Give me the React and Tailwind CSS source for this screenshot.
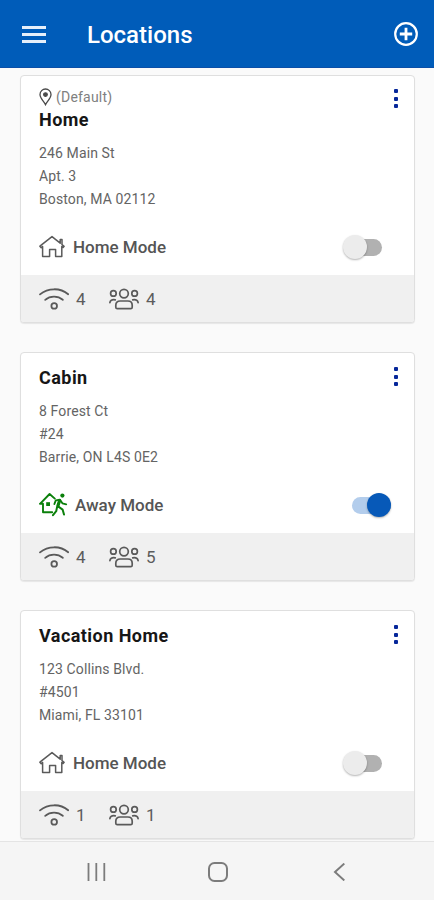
import React, { useState } from 'react';

const initialLocations = [
    { id: 1, name: 'Home', isDefault: true, address: ['246 Main St', 'Apt. 3', 'Boston, MA 02112'], away: false, devices: 4, people: 4 },
    { id: 2, name: 'Cabin', isDefault: false, address: ['8 Forest Ct', '#24', 'Barrie, ON L4S 0E2'], away: true, devices: 4, people: 5 },
    { id: 3, name: 'Vacation Home', isDefault: false, address: ['123 Collins Blvd.', '#4501', 'Miami, FL 33101'], away: false, devices: 1, people: 1 },
];

const PinIcon = () => (
    <svg className="h-[18px] w-[13px] shrink-0" viewBox="0 0 13 18" fill="none" stroke="#4a4a4a" strokeWidth="1.3">
        <path d="M6.5 16.6C5 13.4 1 10.3 1 6.5a5.5 5.5 0 0 1 11 0c0 3.8-4 6.9-5.5 10.1z" />
        <circle cx="6.5" cy="6.6" r="1.8" fill="#4a4a4a" />
    </svg>
);

const HouseIcon = () => (
    <svg className="h-6 w-[26px] shrink-0" viewBox="0 0 26 24" fill="none" stroke="#5a5a5a" strokeWidth="1.5" strokeLinejoin="round" strokeLinecap="round">
        <path d="M.9 11.2 13 1.6l8.2 6.6V4.6h1.8v5.1l2.1 1.6-1 1.2-1.3-1V21.4h-6.2v-6.8h-6v6.8H3.6V11.4l-1.4 1.3z" />
    </svg>
);

const AwayIcon = () => (
    <svg className="h-6 w-[29px] shrink-0" viewBox="0 0 29 24" fill="none" stroke="#0b800b" strokeWidth="1.9" strokeLinejoin="round" strokeLinecap="round">
        <path d="M4 10.8v8.4h9.2M1 10.8h3M1 10.8 10.6 1l5.2 4.6" />
        <rect x="7.2" y="9.2" width="3.8" height="3.8" fill="#0b800b" stroke="none" />
        <circle cx="23.4" cy="2.6" r="2.1" fill="#0b800b" stroke="none" />
        <path d="m15.4 11 1.4-3.6 4-.8 2.6 3.7 3.8 1" />
        <path d="m20.6 7.6-1.8 5.6" strokeWidth="3.2" />
        <path d="m19.4 13.6 4.2 3 1.4 5M18 14.4l-.8 3.8-3.2 4" strokeWidth="2" />
    </svg>
);

const WifiIcon = () => (
    <svg className="h-6 w-[30px] shrink-0" viewBox="0 0 30 24" fill="none" stroke="#5a5a5a" strokeWidth="1.8" strokeLinecap="round">
        <path d="M1 7.4C9 .6 21.4.6 29.2 7.2" />
        <path d="M6.2 12.9c5-4.3 12.6-4.3 17.6-.1" />
        <circle cx="15.2" cy="18.9" r="2.8" />
    </svg>
);

const PeopleIcon = () => (
    <svg className="h-6 w-[30px] shrink-0" viewBox="0 0 30 24" fill="none" stroke="#5a5a5a" strokeWidth="1.7" strokeLinecap="round" strokeLinejoin="round">
        <circle cx="15" cy="6.6" r="4.3" />
        <circle cx="4.4" cy="6.4" r="2.8" />
        <circle cx="25.6" cy="6.4" r="2.8" />
        <path d="M6.8 20.2v-2c0-2.7 1.6-4.2 4.3-4.2h7.8c2.7 0 4.3 1.5 4.3 4.2v2c0 1-.5 1.5-1.5 1.5H8.3c-1 0-1.5-.5-1.5-1.5z" />
        <path d="M.9 15.6c.2-2.2 1.8-3.4 5.4-2.8M29.1 15.6c-.2-2.2-1.8-3.4-5.4-2.8" />
    </svg>
);

const Toggle = ({ on, onClick }) => (
    <button
        onClick={onClick}
        role="switch"
        aria-checked={on}
        className={`flex h-6 w-[39px] items-center ${on ? 'mr-[23px]' : 'mr-8'}`}
    >
        <span className={`flex h-[17px] items-center rounded-full ${on ? 'w-full justify-end bg-[#b3cdec]' : 'ml-[3px] w-9 justify-start bg-[#b1b1b1]'}`}>
            <span className={`size-6 shrink-0 rounded-full shadow-[0_1px_2px_rgba(0,0,0,0.3)] ${on ? 'bg-[#0759b8]' : '-ml-[3px] bg-[#ececec]'}`}></span>
        </span>
    </button>
);

const LocationCard = ({ location, onToggle }) => (
    <div className="overflow-hidden rounded-[4px] border border-[#dfdfdf] bg-white shadow-[0_1px_1px_rgba(0,0,0,0.08)]">
        <div className={`flex justify-between pl-[18px] ${location.isDefault ? 'pt-[10px]' : 'pt-[13px]'}`}>
            <div>
                {location.isDefault && (
                    <div className="flex h-[22px] items-center gap-1 text-[14px] text-[#808080]">
                        <PinIcon />
                        <span className="tracking-[0.2px]">(Default)</span>
                    </div>
                )}
                <h2 className="text-[18px] leading-6 font-bold tracking-[0.45px] text-[#161616]">{location.name}</h2>
                <div className="mt-[10px] text-[14px] leading-[23px] tracking-[0.12px] text-[#646464]">
                    {location.address.map((line) => (
                        <p key={line}>{line}</p>
                    ))}
                </div>
            </div>
            <button className={`mr-[15px] flex h-[19px] w-[5px] flex-col justify-between ${location.isDefault ? 'mt-[3px]' : 'mt-px'}`}>
                <span className="size-1 rounded-[1px] bg-[#06279a]"></span>
                <span className="size-1 rounded-[1px] bg-[#06279a]"></span>
                <span className="size-1 rounded-[1px] bg-[#06279a]"></span>
            </button>
        </div>

        {/* Mode */}
        <div className="mt-6 mb-4 flex h-6 items-center justify-between pl-[18px]">
            <div className={`flex items-center ${location.away ? 'gap-[7px]' : 'gap-2'}`}>
                {location.away ? <AwayIcon /> : <HouseIcon />}
                <span className="pt-px text-[17px] font-medium text-[#555]">{location.away ? 'Away Mode' : 'Home Mode'}</span>
            </div>
            <Toggle on={location.away} onClick={onToggle} />
        </div>

        {/* Counts */}
        <div className="flex h-[47px] items-center bg-[#f0f0f0] pl-[18px] text-[17px] text-[#5c5c5c]">
            <WifiIcon />
            <span className="mt-[3px] ml-[7px] w-[33px]">{location.devices}</span>
            <PeopleIcon />
            <span className="mt-[3px] ml-[7px]">{location.people}</span>
        </div>
    </div>
);

const App = () => {
    const [locations, setLocations] = useState(initialLocations);

    const toggleMode = (id) => {
        setLocations(locations.map((l) => (l.id === id ? { ...l, away: !l.away } : l)));
    };

    return (
        <div className="flex h-[900px] w-[434px] flex-col overflow-hidden bg-[#fafafa] font-['Roboto',sans-serif]">
            {/* Header */}
            <header className="flex h-[68px] shrink-0 items-center border-b border-[#0b4fa8] bg-[#005cb9] pt-px pr-[16px] pl-[22px] text-white">
                <button className="flex h-[17px] w-6 flex-col justify-between">
                    <span className="h-[3px] w-full bg-[#e6effa]"></span>
                    <span className="h-[3px] w-full bg-[#e6effa]"></span>
                    <span className="h-[3px] w-full bg-[#e6effa]"></span>
                </button>
                <h1 className="ml-[41px] flex-1 pt-[2px] text-[24px] leading-8 font-medium">Locations</h1>
                <button>
                    <svg className="block size-6" viewBox="0 0 24 24" fill="none" stroke="#fff">
                        <circle cx="12" cy="12" r="10.8" strokeWidth="2.2" />
                        <path d="M12 5.8v12.4M5.8 12h12.4" strokeWidth="2.8" />
                    </svg>
                </button>
            </header>

            {/* Locations */}
            <main className="flex flex-1 flex-col gap-[29px] overflow-hidden pt-[7px] pr-[19px] pl-5">
                {locations.map((location) => (
                    <LocationCard key={location.id} location={location} onToggle={() => toggleMode(location.id)} />
                ))}
            </main>

            {/* System navigation */}
            <nav className="flex h-[59px] shrink-0 items-center border-t border-[#e4e4e4] bg-[#f5f5f5] pt-[2px] pl-[87px]">
                <svg className="h-[18px] w-[19px]" viewBox="0 0 19 18" stroke="#7c7c7c" strokeWidth="1.8">
                    <path d="M1.5 0v18M9.3 0v18M17.3 0v18" />
                </svg>
                <svg className="ml-[102px] size-5" viewBox="0 0 20 20" fill="none" stroke="#7c7c7c" strokeWidth="2">
                    <rect x="1" y="1" width="18" height="18" rx="5.5" />
                </svg>
                <svg className="ml-[105px] h-[18px] w-3" viewBox="0 0 12 18" fill="none" stroke="#7c7c7c" strokeWidth="2">
                    <path d="M11.3.6 2 9l9.3 8.4" />
                </svg>
            </nav>
        </div>
    );
};

export default App;
